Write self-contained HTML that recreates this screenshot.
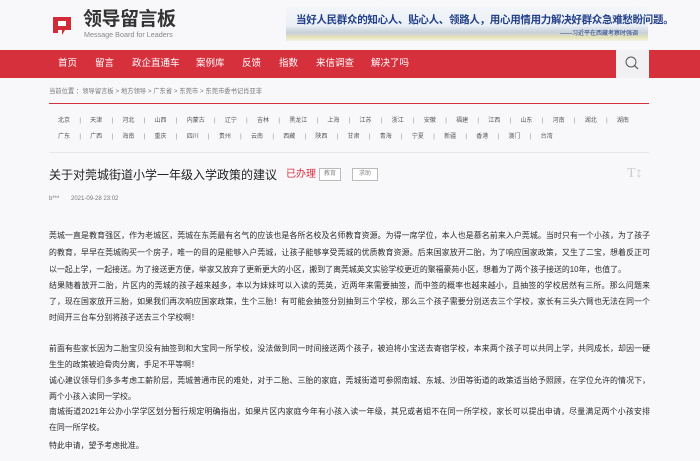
<!DOCTYPE html>
<html><head><meta charset="utf-8">
<style>
*{margin:0;padding:0;box-sizing:border-box}
body{width:700px;height:461px;overflow:hidden;background:#f8f7fa;font-family:"Liberation Sans","Noto Sans CJK SC",sans-serif;color:#333;position:relative}
.a{position:absolute;white-space:nowrap}
.nav{position:absolute;left:0;top:50px;width:700px;height:28px;background:#d7303d}
.nav span{position:absolute;top:7px;color:#fff;font-size:9.5px;line-height:14px}
.prov{position:absolute;left:58px;font-size:6px;color:#555;white-space:nowrap;line-height:8px}
.prov i{font-style:normal;color:#888;margin:0 9.3px}
.l{position:absolute;left:49px;width:601px;font-size:7.9px;line-height:12px;color:#2a2a2a;white-space:nowrap}
.j{text-align:justify;text-align-last:justify}
.tag{position:absolute;top:168px;height:13px;border:1px solid #bbb;font-size:6px;color:#888;line-height:11px;text-align:center;background:#fff}
</style></head><body>
<svg class="a" style="left:50px;top:13px" width="24" height="24" viewBox="0 0 24 24">
<path d="M3 4 L21 4 L21 17 L15 17 L12 22 L12 17 L3 17 Z" fill="#d32a38"/>
<path d="M8 8 L16 8 L16 13 L8 13 Z" fill="#fff"/>
<path d="M3 10 L8 10 L8 20 L3 20Z" fill="#d32a38"/>
</svg>
<div class="a" style="left:83px;top:10px;font-size:19px;line-height:20px;color:#333;font-weight:bold;letter-spacing:-0.5px">领导留言板</div>
<div class="a" style="left:84px;top:31px;font-size:7.2px;color:#888;line-height:8px">Message Board for Leaders</div>
<div class="a" style="left:286px;top:7px;width:362px;height:34px;background:linear-gradient(#f3f6fa 0%,#eaf0f6 55%,#c7cfd8 75%,#e8e5b8 90%,#f1f1ea 100%)">
<div class="a" style="left:10px;top:5px;font-size:10.5px;color:#24408a;font-weight:bold;letter-spacing:-0.3px">当好人民群众的知心人、贴心人、领路人，用心用情用力解决好群众急难愁盼问题。</div>
<div class="a" style="right:10px;top:21px;font-size:6px;color:#24408a">——习近平在西藏考察时强调</div>
</div>
<div class="nav">
<span style="left:58px">首页</span><span style="left:95px">留言</span><span style="left:132px">政企直通车</span><span style="left:196px">案例库</span><span style="left:242px">反馈</span><span style="left:279px">指数</span><span style="left:316px">来信调查</span><span style="left:371px">解决了吗</span>
<div class="a" style="left:616px;top:0;width:33px;height:28px;background:#f1f1f3">
<svg width="33" height="28"><circle cx="15" cy="12" r="5" fill="none" stroke="#555" stroke-width="1"/><line x1="18.5" y1="15.5" x2="22" y2="19" stroke="#555" stroke-width="1.2"/></svg>
</div></div>
<div class="a" style="left:49px;top:86px;font-size:6.3px;color:#777">当前位置 ：领导留言板 &gt; 地方领导 &gt; 广东省 &gt; 东莞市 &gt; 东莞市委书记肖亚非</div>
<div class="a" style="left:49px;top:103px;width:600px;height:1px;background:#d7303d"></div>
<div class="prov" style="top:117px">北京<i>|</i>天津<i>|</i>河北<i>|</i>山西<i>|</i>内蒙古<i>|</i>辽宁<i>|</i>吉林<i>|</i>黑龙江<i>|</i>上海<i>|</i>江苏<i>|</i>浙江<i>|</i>安徽<i>|</i>福建<i>|</i>江西<i>|</i>山东<i>|</i>河南<i>|</i>湖北<i>|</i>湖南</div>
<div class="prov" style="top:133px">广东<i>|</i>广西<i>|</i>海南<i>|</i>重庆<i>|</i>四川<i>|</i>贵州<i>|</i>云南<i>|</i>西藏<i>|</i>陕西<i>|</i>甘肃<i>|</i>青海<i>|</i>宁夏<i>|</i>新疆<i>|</i>香港<i>|</i>澳门<i>|</i>台湾</div>
<div class="a" style="left:49px;top:152px;width:600px;height:1px;background:#e6e6e8"></div>
<div class="a" style="left:49px;top:167px;font-size:12px;line-height:16px;color:#222">关于对莞城街道小学一年级入学政策的建议</div>
<div class="a" style="left:286px;top:168px;font-size:10px;line-height:14px;color:#d7303d">已办理</div>
<div class="tag" style="left:319px;width:22px">教育</div>
<div class="tag" style="left:352px;width:26px">求助</div>
<div class="a" style="left:627px;top:166px;font-size:14px;color:#ccc;font-family:'Liberation Serif',serif">T↕</div>
<div class="a" style="left:49px;top:196px;font-size:6px;color:#777">b***&nbsp;&nbsp;&nbsp;&nbsp;&nbsp;&nbsp;&nbsp;2021-09-28 23:02</div>
<div class="l j" style="top:230px">莞城一直是教育强区，作为老城区，莞城在东莞最有名气的应该也是各所名校及名师教育资源。为得一席学位，本人也是慕名前来入户莞城。当时只有一个小孩，为了孩子</div>
<div class="l j" style="top:247px">的教育，早早在莞城购买一个房子，唯一的目的是能够入户莞城，让孩子能够享受莞城的优质教育资源。后来国家放开二胎，为了响应国家政策，又生了二宝，想着反正可</div>
<div class="l" style="top:264px">以一起上学，一起接送。为了接送更方便，举家又放弃了更新更大的小区，搬到了离莞城英文实验学校更近的聚福豪苑小区，想着为了两个孩子接送的10年，也值了。</div>
<div class="l j" style="top:280px">结果随着放开二胎，片区内的莞城的孩子越来越多，本以为妹妹可以入读的莞英，近两年来需要抽签，而中签的概率也越来越小，且抽签的学校居然有三所。那么问题来</div>
<div class="l j" style="top:296px">了，现在国家放开三胎，如果我们再次响应国家政策，生个三胎！有可能会抽签分别抽到三个学校，那么三个孩子需要分别送去三个学校，家长有三头六臂也无法在同一个</div>
<div class="l" style="top:312px">时间开三台车分别将孩子送去三个学校啊！</div>
<div class="l j" style="top:343px">前面有些家长因为二胎宝贝没有抽签到和大宝同一所学校，没法做到同一时间接送两个孩子，被迫将小宝送去寄宿学校，本来两个孩子可以共同上学，共同成长，却因一硬</div>
<div class="l" style="top:359px">生生的政策被迫骨肉分离，手足不平等啊！</div>
<div class="l j" style="top:375px">诚心建议领导们多多考虑工薪阶层，莞城普通市民的难处，对于二胎、三胎的家庭，莞城街道可参照南城、东城、沙田等街道的政策适当给予照顾，在学位允许的情况下，</div>
<div class="l" style="top:391px">两个小孩入读同一学校。</div>
<div class="l j" style="top:406px">南城街道2021年公办小学学区划分暂行规定明确指出，如果片区内家庭今年有小孩入读一年级，其兄或者姐不在同一所学校，家长可以提出申请，尽量满足两个小孩安排</div>
<div class="l" style="top:422px">在同一所学校。</div>
<div class="l" style="top:440px">特此申请，望予考虑批准。</div>
</body></html>
